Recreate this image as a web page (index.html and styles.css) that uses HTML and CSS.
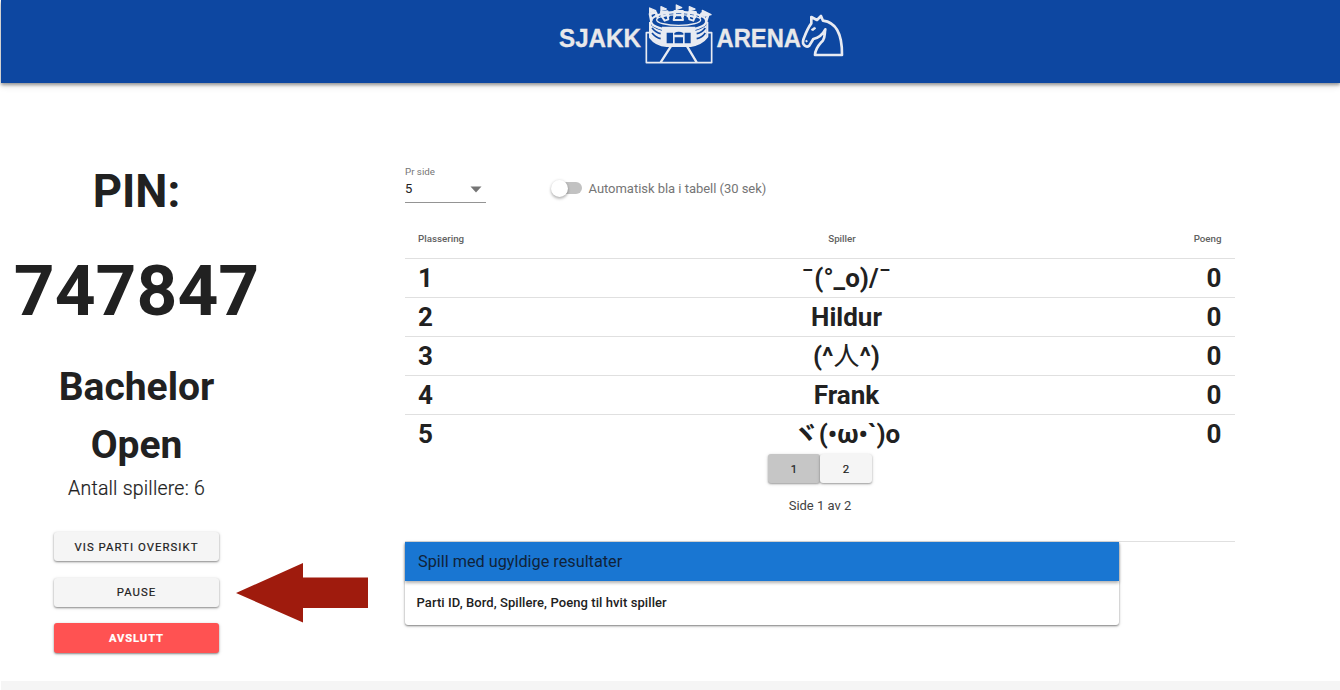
FILE: index.html
```html
<!DOCTYPE html>
<html lang="no">
<head>
<meta charset="utf-8">
<title>Sjakkarena</title>
<link rel="stylesheet" href="styles.css">
</head>
<body>
<header class="topbar">
  <svg class="logo" viewBox="0 0 290 70" width="290" height="70" aria-label="Sjakk Arena">
    <text class="logo-text" x="3" y="47" textLength="82" lengthAdjust="spacingAndGlyphs">SJAKK</text>
    <text class="logo-text" x="160.500" y="47" textLength="84.500" lengthAdjust="spacingAndGlyphs">ARENA</text>
    <g transform="translate(84 0) scale(.3333)" fill="none" stroke="#e8ebf2" stroke-width="6" stroke-linejoin="round">
      <path d="M32 98H19V188H215V98H202" stroke-width="5"/>
      <path d="M30 66V112Q48 136 80 138H152Q186 132 202 110V66"/>
      <path d="M32 74Q46 90 78 94V138Q48 134 32 112ZM200 74Q186 90 155 94V138Q186 132 200 112Z" fill="#e8ebf2" stroke="none"/>
      <path d="M36 84Q48 98 62 101M36 99Q48 113 62 116M196 84Q186 98 170 101M196 99Q186 113 170 116" stroke="#0d47a1" stroke-width="5"/>
      <ellipse cx="116" cy="64" rx="83" ry="28" stroke-width="7"/>
      <ellipse cx="116" cy="60" rx="66" ry="16" stroke-width="4"/>
      <path d="M66 80H166V138H66Z" fill="#e8ebf2" stroke="none"/>
      <path d="M90 98H99V130H80V98ZM134 98H152V130H134ZM103 99Q116 92 130 99V104H103ZM104 112H129V130H104Z" fill="#0d47a1" stroke="none"/>
      <path d="M94 137L62 187M140 137L170 187" stroke-width="7"/>
      <path d="M34 63L30 42L47 37L54 54M67 52L64 37L82 35L85 52M104 52V34H128V52M143 52L149 35L167 37L164 54M179 54L185 41L204 46L198 65" stroke-width="8"/>
      <path d="M29 44V24L47 32L33 37M63 38V20L79 27L64 31M109 33V15L125 23L110 28M148 37V20L165 27L149 32M187 46V31L213 44L192 49" fill="#e8ebf2" stroke-width="4"/>
      <path d="M66 50L82 44L85 58L74 62ZM104 46H126L129 60H101ZM146 46L164 52L160 62L148 58Z" stroke-width="6"/>
    </g>
    <g transform="translate(144 0) scale(.3333)" fill="none" stroke="#e8ebf2" stroke-width="8" stroke-linejoin="round">
      <path d="M334 70L334 51L351 60L363 48L369 62C402 66 427 91 426 165H345C346 143 358 134 369 121C376 112 373 102 376 88C368 104 356 113 340 117L328 137C319 144 305 135 310 119C315 106 321 87 334 70Z"/>
      <path d="M333 89L343 82L348 85L339 92Z" fill="#e8ebf2" stroke-width="2"/>
      <path d="M318 121L321 126" stroke-width="6"/>
    </g>
  </svg>
</header>
<main class="content">
  <aside class="side">
    <div class="pin-label">PIN:</div>
    <div class="pin">747847</div>
    <div class="name">Bachelor<br>Open</div>
    <div class="count">Antall spillere: 6</div>
    <div class="actions">
      <button class="btn">VIS PARTI OVERSIKT</button>
      <button class="btn">PAUSE</button>
      <button class="btn btn-danger">AVSLUTT</button>
    </div>
  </aside>
  <div class="pointer">
    <svg width="134" height="62" viewBox="0 0 134 62"><path d="M1 31L68 1V15.500H133V46H68V60.500Z" fill="#9f1b0d"/></svg>
  </div>
  <section class="board">
    <div class="controls">
      <div class="select">
        <span class="select-label">Pr side</span>
        <span class="select-value">5<svg width="12" height="7" viewBox="0 0 12 7"><path d="M.5.500H11.500L6 6.500Z" fill="#757575"/></svg></span>
      </div>
      <div class="toggle"><span class="track"></span><span class="toggle-text">Automatisk bla i tabell (30 sek)</span></div>
    </div>
    <table class="players">
      <thead><tr><th>Plassering</th><th>Spiller</th><th>Poeng</th></tr></thead>
      <tbody>
        <tr><td>1</td><td>¯(°_o)/¯</td><td>0</td></tr>
        <tr><td>2</td><td>Hildur</td><td>0</td></tr>
        <tr><td>3</td><td>(^<span class="kanji">人</span>^)</td><td>0</td></tr>
        <tr><td>4</td><td>Frank</td><td>0</td></tr>
        <tr><td>5</td><td>ヾ(•ω•`)o</td><td>0</td></tr>
      </tbody>
    </table>
    <div class="pages"><button class="page active">1</button><button class="page">2</button></div>
    <div class="page-info">Side 1 av 2</div>
    <div class="invalid-area">
      <div class="card">
        <div class="card-title">Spill med ugyldige resultater</div>
        <div class="card-body">Parti ID, Bord, Spillere, Poeng til hvit spiller</div>
      </div>
    </div>
  </section>
</main>
<footer class="footer"></footer>
</body>
</html>
```
FILE: styles.css
```css
* { box-sizing: border-box; }
body { margin: 0; height: 690px; overflow: hidden; background: #fff; color: #212121; font-family: Roboto, "Noto Sans CJK JP", sans-serif; }
.topbar { height: 83px; margin-left: 1px; padding-left: 555px; background: #0d47a1; box-shadow: 0 2px 3px rgba(0,0,0,.35), 0 3px 7px rgba(0,0,0,.12); }
.logo { display: block; }
.logo-text { font: bold 25px "Liberation Sans", Arial, sans-serif; fill: #e8e8ea; stroke: #e8e8ea; stroke-width: .3px; }
.content { display: flex; height: 598px; }
.side { width: 273px; padding-top: 78px; text-align: center; flex: none; }
.pin-label { font-size: 45.5px; line-height: 62px; font-weight: 700; }
.pin { font-size: 71.3px; line-height: 94px; font-weight: 700; margin-top: 21px; }
.name { font-size: 39px; line-height: 58px; font-weight: 700; margin-top: 20px; }
.count { font-size: 19.5px; line-height: 30px; letter-spacing: .2px; font-weight: 300; -webkit-text-stroke: .2px #212121; }
.actions { display: flex; flex-direction: column; align-items: center; gap: 16.500px; margin-top: 28px; }
.btn { width: 165px; height: 29.200px; padding: 0; border: 0; border-radius: 3px; background: #f5f5f5; color: #212121; font: 400 11.375px Roboto, sans-serif; letter-spacing: 1.050px; -webkit-text-stroke: .2px currentColor; box-shadow: 0 1px 2px rgba(0,0,0,.4), 0 1px 4px rgba(0,0,0,.12); }
.btn-danger { background: #ff5252; color: #fff; font-weight: 700; font-size: 11.200px; letter-spacing: .9px; padding-top: 1px; }
.pointer { width: 132px; flex: none; padding: 479px 0 0; margin-left: -38px; }
.pointer svg { display: block; }
.board { width: 830px; margin-left: 38px; padding-top: 83px; }
.controls { display: flex; height: 52px; }
.select { width: 81px; height: 37px; border-bottom: 1px solid #949494; display: flex; flex-direction: column; }
.select-label { font-size: 9.750px; line-height: 12px; color: #757575; }
.select-value { display: flex; justify-content: space-between; align-items: center; font-size: 13px; line-height: 22px; padding-right: 4px; }
.toggle { display: flex; align-items: center; height: 26px; margin: 9px 0 0 66px; color: #757575; font-size: 13px; }
.track { display: flow-root; width: 30px; height: 12px; border-radius: 6px; background: #c2c2c2; margin-right: 6.500px; }
.toggle-text { letter-spacing: -.03px; }
.track::before { content: ""; display: block; width: 17px; height: 17px; border-radius: 50%; background: #fff; margin: -2.500px 0 0 -1px; box-shadow: 0 2px 3px rgba(0,0,0,.25), 0 0 3px rgba(0,0,0,.12); }
.players { width: 830px; border-collapse: separate; border-spacing: 0; table-layout: fixed; }
.players th { height: 40px; padding: 1px 13px 0; font-size: 9.750px; font-weight: 500; color: #616161; }
.players td { height: 39px; padding: 0 13px; border-top: 1px solid #e0e0e0; font-size: 26px; line-height: 38px; font-weight: 700; white-space: nowrap; }
.players th:first-child, .players td:first-child { text-align: left; width: 200px; }
.players th:last-child, .players td:last-child { text-align: right; width: 147px; padding-right: 13.500px; }
.players th:nth-child(2) { text-align: center; padding-right: 22px; }
.players td:nth-child(2) { text-align: center; padding-right: 13px; }
.kanji { font-weight: 400; }
.pages { display: flex; justify-content: center; margin-top: 1px; }
.page { width: 52px; height: 29px; border: 0; border-radius: 3px; background: #f5f5f5; color: #212121; font: 400 11.400px Roboto, sans-serif; -webkit-text-stroke: .2px currentColor; box-shadow: 0 1px 2px rgba(0,0,0,.35), 0 1px 4px rgba(0,0,0,.1); }
.page.active { background: #c6c6c6; }
.page-info { text-align: center; font-size: 13px; line-height: 20px; margin-top: 13px; color: #424242; }
.invalid-area { margin-top: 25px; border-top: 1px solid #e0e0e0; }
.card { width: 714px; border-radius: 0 0 3px 3px; box-shadow: 0 1px 2px rgba(0,0,0,.45), 0 1px 4px rgba(0,0,0,.12); }
.card-title { height: 39px; padding-left: 13px; background: #1976d2; font-size: 16.250px; line-height: 39px; color: #10233a; box-shadow: 0 2px 3px rgba(0,0,0,.3); }
.card-body { height: 44px; padding-left: 11.500px; font-size: 13px; line-height: 44px; font-weight: 500; letter-spacing: .08px; }
.footer { height: 9px; margin-left: 1px; background: #f5f5f5; }
```
